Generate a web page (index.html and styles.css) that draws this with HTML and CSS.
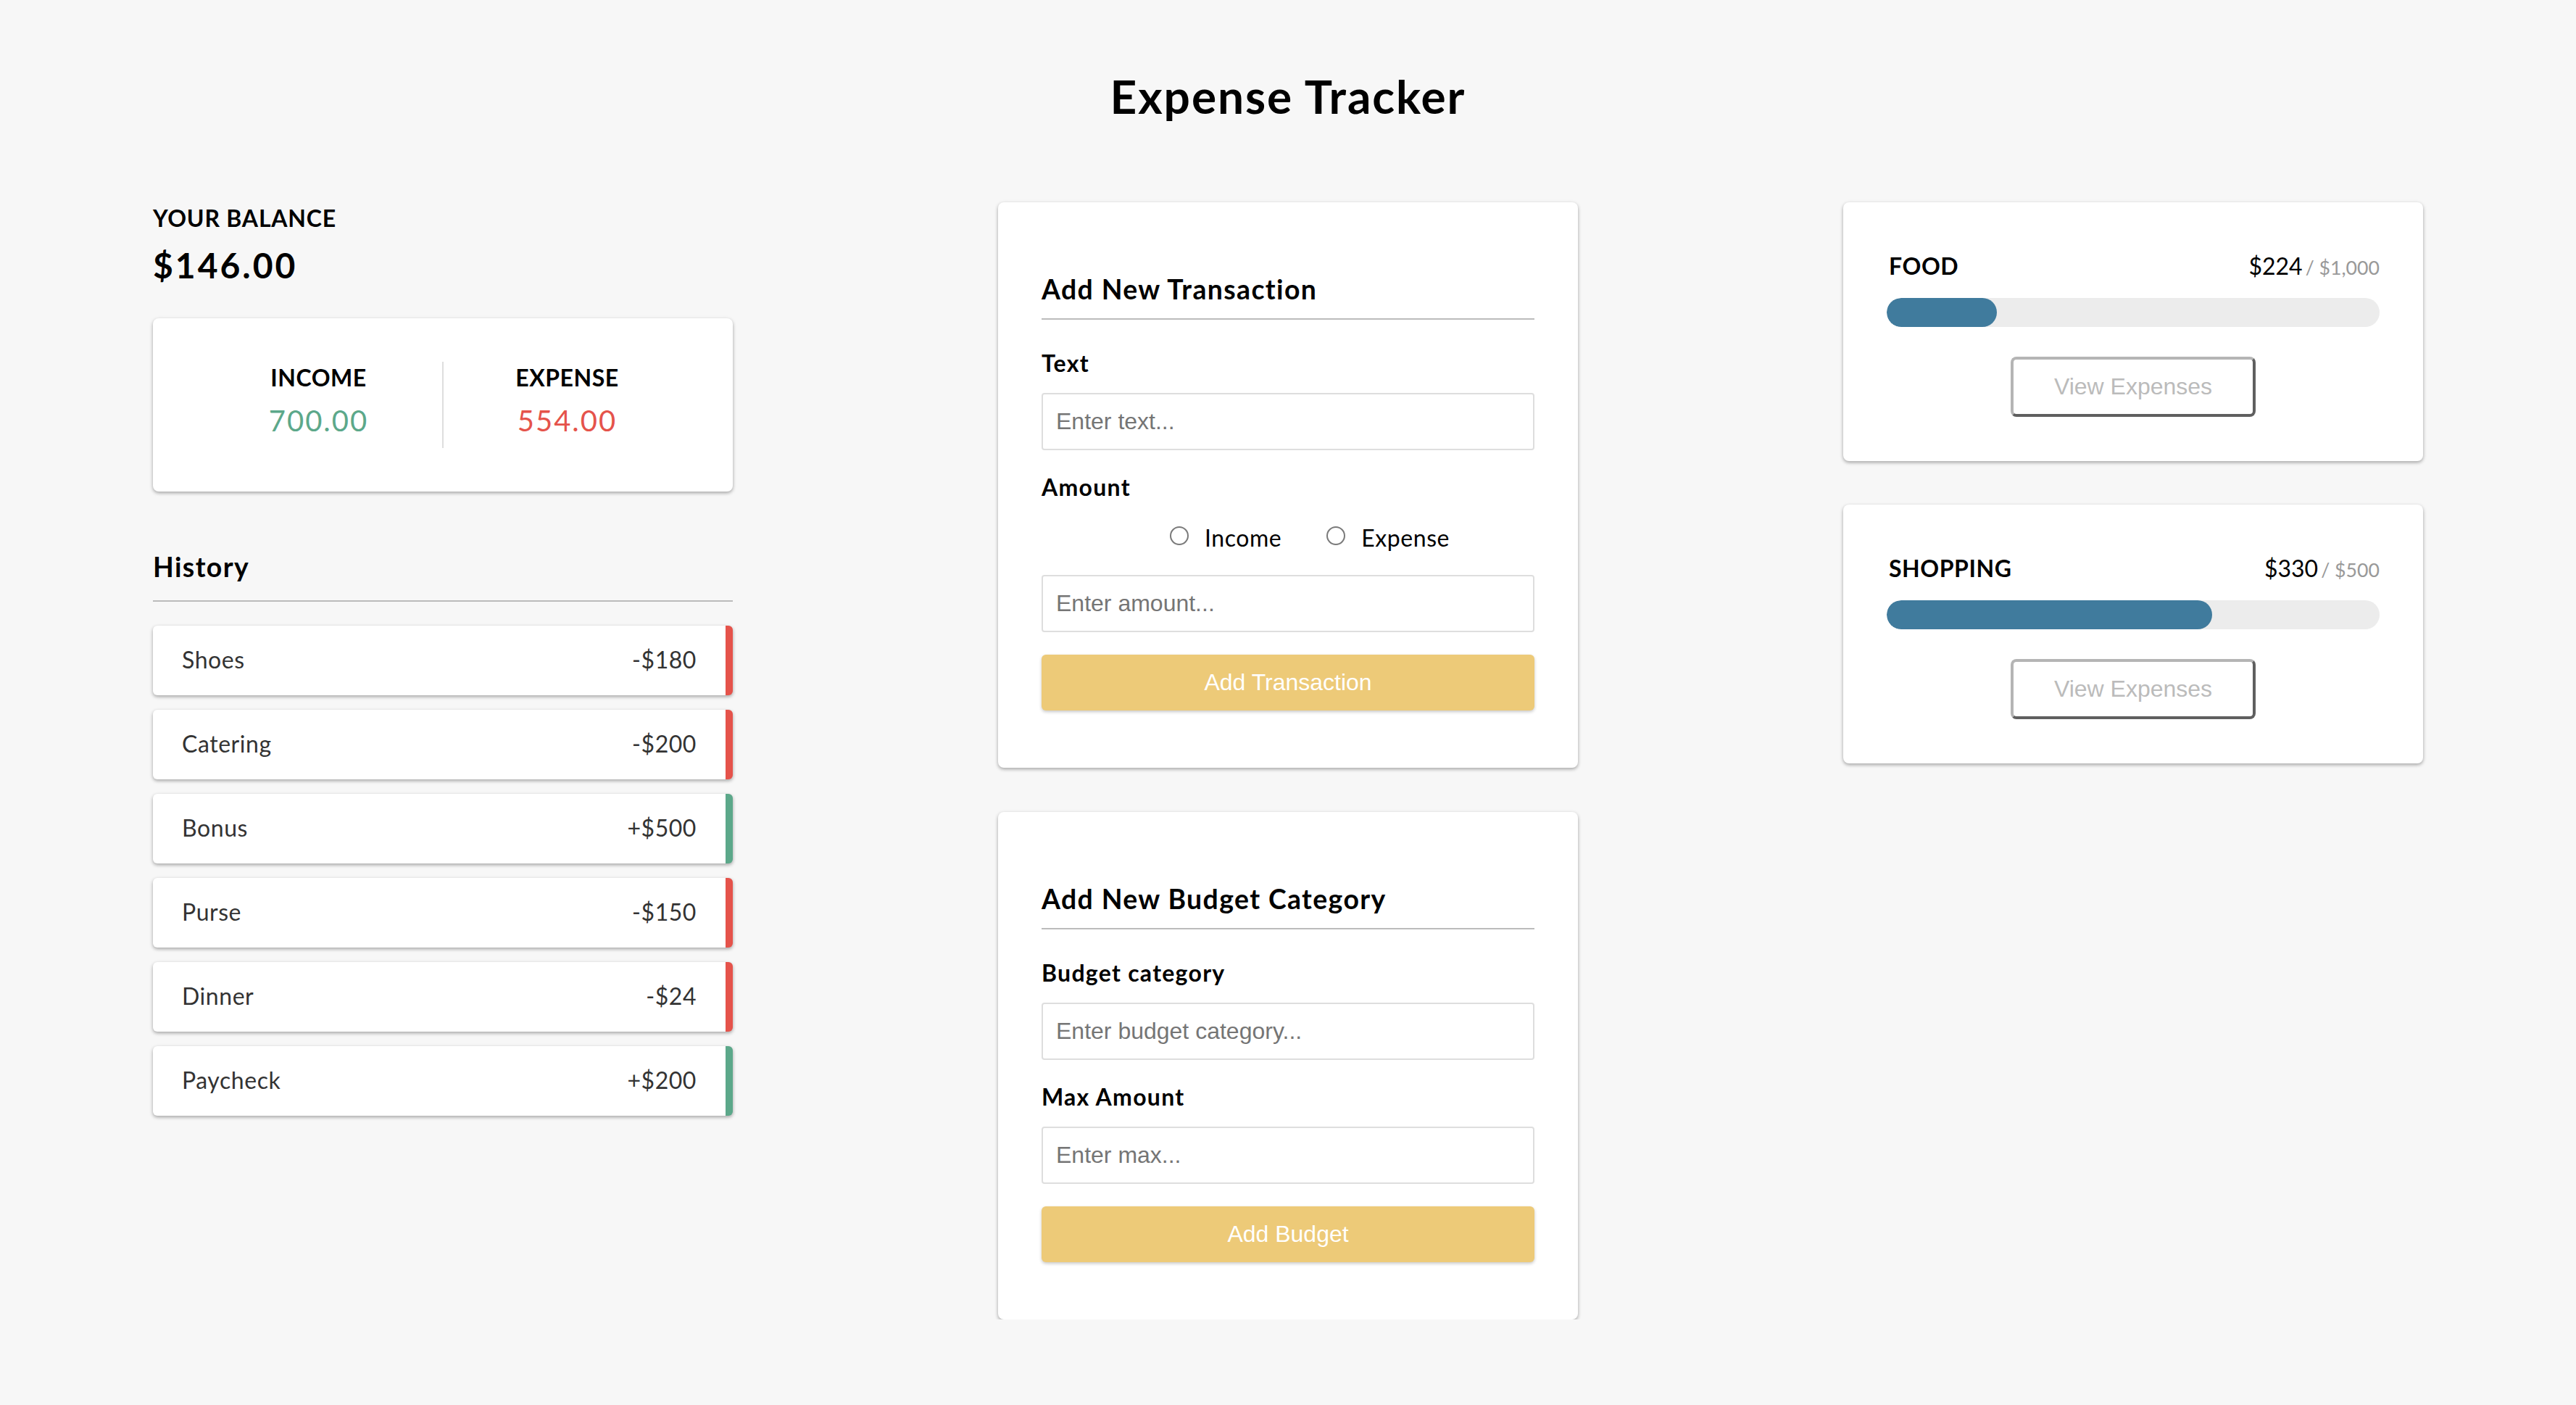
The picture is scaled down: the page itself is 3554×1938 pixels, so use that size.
FILE: index.html
```html
<!DOCTYPE html>
<html lang="en">
<head>
<meta charset="utf-8">
<title>Expense Tracker</title>
<link rel="stylesheet" href="styles.css">
</head>
<body>
<h1 class="page-title">Expense Tracker</h1>
<main class="layout">
  <section class="col">
    <h4 class="balance-label">Your Balance</h4>
    <h2 class="balance">$146.00</h2>
    <div class="card inc-exp">
      <div class="inc-exp-item">
        <h4 class="inc-exp-title">Income</h4>
        <p class="money plus">700.00</p>
      </div>
      <div class="inc-exp-item">
        <h4 class="inc-exp-title">Expense</h4>
        <p class="money minus">554.00</p>
      </div>
    </div>
    <h3 class="section-title history-title">History</h3>
    <ul class="list">
      <li class="list-item minus"><span>Shoes</span><span>-$180</span></li>
      <li class="list-item minus"><span>Catering</span><span>-$200</span></li>
      <li class="list-item plus"><span>Bonus</span><span>+$500</span></li>
      <li class="list-item minus"><span>Purse</span><span>-$150</span></li>
      <li class="list-item minus"><span>Dinner</span><span>-$24</span></li>
      <li class="list-item plus"><span>Paycheck</span><span>+$200</span></li>
    </ul>
  </section>

  <section class="col">
    <div class="card form-card">
      <h3 class="section-title">Add New Transaction</h3>
      <form class="form">
        <label class="field-label" for="text">Text</label>
        <input class="text-input" id="text" type="text" placeholder="Enter text...">
        <label class="field-label" for="amount">Amount</label>
        <div class="radio-row">
          <label class="radio first"><input type="radio" name="kind"><span>Income</span></label>
          <label class="radio"><input type="radio" name="kind"><span>Expense</span></label>
        </div>
        <input class="text-input after-radio" id="amount" type="text" placeholder="Enter amount...">
        <button class="btn" type="button">Add Transaction</button>
      </form>
    </div>
    <div class="card form-card second">
      <h3 class="section-title">Add New Budget Category</h3>
      <form class="form">
        <label class="field-label" for="category">Budget category</label>
        <input class="text-input" id="category" type="text" placeholder="Enter budget category...">
        <label class="field-label" for="max">Max Amount</label>
        <input class="text-input" id="max" type="text" placeholder="Enter max...">
        <button class="btn" type="button">Add Budget</button>
      </form>
    </div>
  </section>

  <section class="col">
    <div class="card budget-card">
      <div class="budget-head">
        <h4 class="budget-name">FOOD</h4>
        <div class="budget-amount">$224<small>/ $1,000</small></div>
      </div>
      <div class="progress"><div class="progress-fill" style="width:22.4%"></div></div>
      <button class="view-btn" type="button">View Expenses</button>
    </div>
    <div class="card budget-card second">
      <div class="budget-head">
        <h4 class="budget-name">SHOPPING</h4>
        <div class="budget-amount">$330<small>/ $500</small></div>
      </div>
      <div class="progress"><div class="progress-fill" style="width:66%"></div></div>
      <button class="view-btn" type="button">View Expenses</button>
    </div>
  </section>
</main>
</body>
</html>
```

FILE: styles.css
```css
* {
  box-sizing: border-box;
}

body {
  margin: 0;
  background: #f7f7f7;
  color: #000;
  font-family: Lato, "Noto Sans", sans-serif;
  letter-spacing: 0.035em;
}

.page-title {
  margin: 0;
  padding-top: 95px;
  font-size: 64px;
  line-height: 76.8px;
  font-weight: 700;
  letter-spacing: 0.03em;
  text-align: center;
}

.layout {
  display: flex;
  align-items: flex-start;
  gap: 366px;
  padding: 0 211px;
  margin-top: 107.2px;
}

.col {
  width: 800px;
  flex: 0 0 800px;
}

.card {
  background: #fff;
  border-radius: 8px;
  box-shadow: 0 2px 6px rgba(0, 0, 0, 0.12), 0 2px 4px rgba(0, 0, 0, 0.24);
}

/* ---------- balance column ---------- */
.balance-label {
  margin: 2.6px 0 0;
  font-size: 32px;
  line-height: 38.4px;
  font-weight: 700;
  letter-spacing: 0.025em;
  text-transform: uppercase;
}

.balance {
  margin: 17.5px 0 0;
  font-size: 48px;
  line-height: 57.6px;
  font-weight: 700;
  letter-spacing: 3px;
}

.inc-exp {
  display: flex;
  margin-top: 43.9px;
  padding: 60px 58px;
}

.inc-exp-item {
  flex: 1;
  text-align: center;
}

.inc-exp-item:first-child {
  border-right: 2px solid #dedede;
}

.inc-exp-title {
  margin: 0;
  padding-top: 2.6px;
  font-size: 32px;
  line-height: 38.4px;
  font-weight: 700;
  text-transform: uppercase;
}

.money {
  margin: 16.5px 0 13.2px;
  font-size: 40px;
  line-height: 48px;
  letter-spacing: 2px;
}

.money.plus {
  color: #5ca88a;
}

.money.minus {
  color: #e5534b;
}

.section-title {
  margin: 0;
  font-size: 37.4px;
  line-height: 44.9px;
  font-weight: 700;
  letter-spacing: 0.037em;
  border-bottom: 2px solid #bbb;
}

.history-title {
  margin-top: 82.8px;
  padding-bottom: 22.9px;
}

.list {
  list-style: none;
  margin: 32.4px 0 0;
  padding: 0;
  display: flex;
  flex-direction: column;
  gap: 20px;
}

.list-item {
  display: flex;
  justify-content: space-between;
  padding: 28.6px 40px 29px 40px;
  font-size: 32px;
  line-height: 38.4px;
  color: #333;
  background: #fff;
  border-radius: 6px;
  box-shadow: 0 2px 6px rgba(0, 0, 0, 0.12), 0 2px 4px rgba(0, 0, 0, 0.24);
}

.list-item.minus {
  border-right: 10px solid #e5534b;
}

.list-item.plus {
  border-right: 10px solid #5ca88a;
}

/* ---------- form column ---------- */
.form-card {
  padding: 97.9px 60px 79.3px;
}

.form-card.second {
  margin-top: 60.5px;
  padding-bottom: 79.4px;
}

.form-card .section-title {
  padding-bottom: 17.2px;
}

.form {
  padding-top: 9px;
}

.field-label {
  display: block;
  margin-top: 32.1px;
  font-size: 32px;
  line-height: 38.4px;
  font-weight: 700;
  letter-spacing: 0.04em;
}

.text-input {
  display: block;
  width: 100%;
  height: 79.3px;
  margin-top: 21.4px;
  padding: 0 18px;
  border: 2px solid #dedede;
  border-radius: 4px;
  background: #fff;
  font-family: "Liberation Sans", Arial, sans-serif;
  font-size: 32px;
  color: #333;
  outline: none;
}

.text-input::placeholder {
  color: #757575;
}

.text-input.after-radio {
  margin-top: 31.6px;
}

.radio-row {
  display: flex;
  align-items: center;
  margin-top: 31px;
  padding-left: 177px;
  font-size: 32px;
  line-height: 38.4px;
}

.radio {
  display: flex;
  align-items: center;
  gap: 22px;
}

.radio.first {
  margin-right: 62px;
}

.radio input {
  appearance: none;
  -webkit-appearance: none;
  width: 26px;
  height: 26px;
  margin: -5.2px 0 0;
  border: 2px solid #7a7a7a;
  border-radius: 50%;
  background: #fff;
}

.btn {
  display: block;
  width: 100%;
  height: 76.7px;
  margin-top: 31.3px;
  border: 0;
  border-radius: 6px;
  background: #edca78;
  color: #fff;
  font-family: "Liberation Sans", Arial, sans-serif;
  font-size: 32px;
  box-shadow: 0 2px 4px rgba(0, 0, 0, 0.22);
}

/* ---------- budget column ---------- */
.budget-card {
  padding: 68.7px 60px 61.3px;
}

.budget-card.second {
  margin-top: 60px;
}

.budget-head {
  display: flex;
  justify-content: space-between;
  align-items: baseline;
  line-height: 38.4px;
}

.budget-name {
  margin: 0 0 0 3px;
  font-size: 32px;
  font-weight: 700;
}

.budget-amount {
  font-size: 32px;
  letter-spacing: 0;
}

.budget-amount small {
  margin-left: 4px;
  font-size: 26.7px;
  color: #999;
}

.progress {
  height: 40px;
  margin-top: 22.9px;
  border-radius: 20px;
  background: #ececec;
  overflow: hidden;
}

.progress-fill {
  height: 100%;
  border-radius: 20px;
  background: #407b9d;
}

.view-btn {
  display: block;
  width: 338.4px;
  height: 82.7px;
  margin: 41px auto 0;
  border: 4px solid;
  border-color: #b5b5b5 #5f5f5f #5f5f5f #b5b5b5;
  border-radius: 8px;
  background: #fff;
  color: #bbb;
  font-family: "Liberation Sans", Arial, sans-serif;
  font-size: 32px;
}
```
